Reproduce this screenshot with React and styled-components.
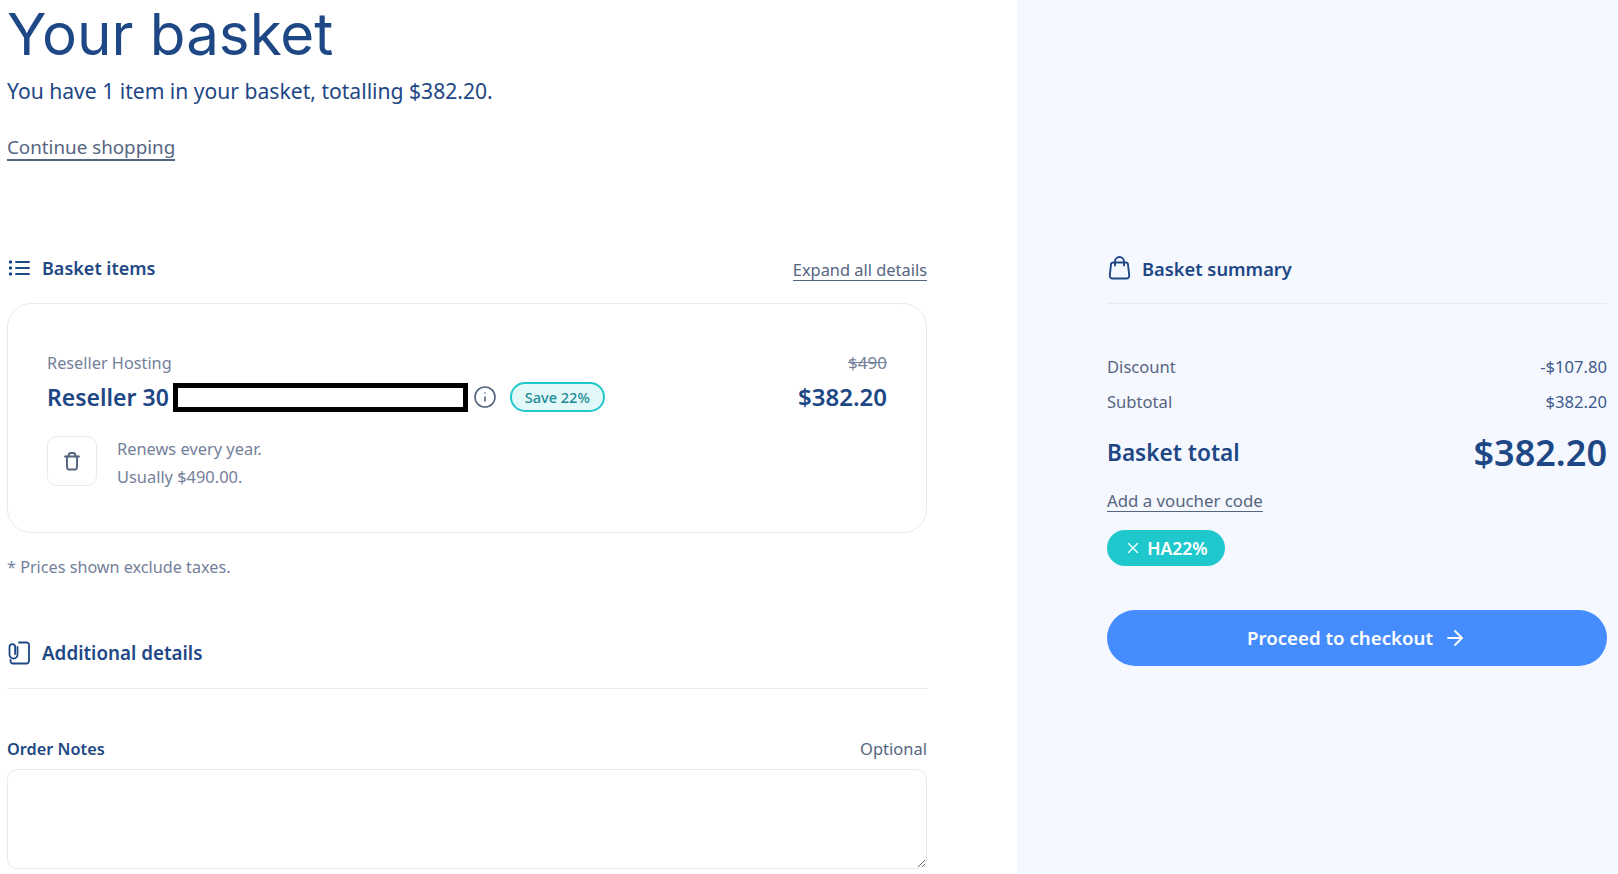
import React from 'react';
import styled, { createGlobalStyle } from 'styled-components';
import { ArrowRight, Info, X } from 'lucide-react';

const NAVY = '#1e4785';
const SLATE = '#56657f';
const GREY = '#74809a';
const LINE = '#e8eaf2';
const TEAL = '#1fc8cc';

const GlobalStyle = createGlobalStyle`
	html, body {
		margin: 0;
		padding: 0;
		background: #fff;
	}
	body {
		font-family: "Noto Sans", "Open Sans", sans-serif;
		color: ${SLATE};
	}
`;

const Page = styled.div`
	width: 100%;
	height: 874px;
	overflow: hidden;
	display: grid;
	grid-template-columns: 1017px 1fr;
`;

const Main = styled.main`
	padding: 0 90px 0 7px;
	display: flex;
	flex-direction: column;
`;

const Sidebar = styled.aside`
	background: #f5f8ff;
	padding: 250px 11px 0 90px;
	display: flex;
	flex-direction: column;
`;

const Title = styled.h1`
	margin: 0;
	font-family: Inter, sans-serif;
	font-size: 58.3px;
	font-weight: 400;
	line-height: 68px;
	color: ${NAVY};
`;

const Lead = styled.p`
	margin: 8px 0 0;
	font-size: 21.1px;
	line-height: 30px;
	color: ${NAVY};
`;

const TextLink = styled.a`
	align-self: ${props => props.$self || 'flex-start'};
	margin-top: ${props => props.$top || 0}px;
	color: ${SLATE};
	font-size: ${props => props.$size || 16.4}px;
	line-height: 1.25;
	border-bottom: ${props => props.$thick ? 2 : 1}px solid ${SLATE};
	cursor: pointer;
`;

const ContinueRow = styled.div`
	margin: 30px 0 89px;
	display: flex;
`;

const SectionHead = styled.div`
	display: flex;
	align-items: center;
	justify-content: space-between;
	height: 36px;
`;

const SectionTitle = styled.h2`
	margin: 0;
	display: flex;
	align-items: center;
	gap: 11px;
	font-size: ${props => props.$size}px;
	font-weight: 600;
	color: ${NAVY};
`;

const IconSlot = styled.span`
	width: 24px;
	height: 24px;
	display: flex;
	align-items: center;
	justify-content: center;
	color: ${NAVY};
`;

const Card = styled.section`
	margin-top: 17px;
	height: 230px;
	box-sizing: border-box;
	border: 1.5px solid ${LINE};
	border-radius: 24px;
	padding: 47px 39px 0;
	display: flex;
	justify-content: space-between;
`;

const ItemInfo = styled.div`
	display: flex;
	flex-direction: column;
`;

const Category = styled.div`
	font-size: 16.3px;
	line-height: 24px;
	color: ${GREY};
`;

const NameRow = styled.div`
	margin-top: 4px;
	height: 36px;
	display: flex;
	align-items: center;
`;

const ItemName = styled.div`
	font-size: 23px;
	font-weight: 600;
	color: ${NAVY};
`;

const Redacted = styled.div`
	margin-left: 4px;
	width: 295px;
	height: 29px;
	box-sizing: border-box;
	border: 5px solid #000;
	background: #fff;
`;

const InfoIcon = styled(Info)`
	margin-left: 5px;
	color: ${SLATE};
`;

const SaveBadge = styled.span`
	margin-left: 13px;
	width: 95px;
	height: 30px;
	box-sizing: border-box;
	display: flex;
	align-items: center;
	justify-content: center;
	border: 2px solid ${TEAL};
	border-radius: 15px;
	background: #e3f8f8;
	color: #1a8a96;
	font-size: 14.5px;
	font-weight: 500;
`;

const RenewRow = styled.div`
	margin-top: 21px;
	display: flex;
	gap: 20px;
`;

const TrashButton = styled.button`
	width: 50px;
	height: 50px;
	padding: 0;
	display: flex;
	align-items: center;
	justify-content: center;
	background: #fff;
	border: 1.5px solid ${LINE};
	border-radius: 10px;
	color: ${SLATE};
`;

const RenewText = styled.div`
	margin-top: -1px;
	font-size: 16.4px;
	line-height: 28px;
	color: ${GREY};
`;

const PriceColumn = styled.div`
	display: flex;
	flex-direction: column;
	align-items: flex-end;
`;

const OldPrice = styled.div`
	font-size: 17px;
	line-height: 24px;
	color: ${GREY};
	text-decoration: line-through;
`;

const Price = styled.div`
	margin-top: 4px;
	font-size: 24px;
	line-height: 36px;
	font-weight: 600;
	color: ${NAVY};
`;

const TaxNote = styled.p`
	margin: 22px 0 56px;
	font-size: 16.2px;
	line-height: 24px;
	color: ${GREY};
`;

const RuledHead = styled(SectionHead)`
	padding-bottom: 17px;
	border-bottom: 1.5px solid ${LINE};
`;

const NotesHead = styled.div`
	margin-top: 46px;
	display: flex;
	justify-content: space-between;
	align-items: center;
	height: 28px;
`;

const NotesLabel = styled.label`
	font-size: 16.3px;
	font-weight: 600;
	color: ${NAVY};
`;

const Optional = styled.span`
	margin-top: -2px;
	font-size: 16.5px;
	color: ${SLATE};
`;

const Notes = styled.textarea`
	margin-top: 6px;
	width: 100%;
	height: 100px;
	box-sizing: border-box;
	display: block;
	border: 1.5px solid ${LINE};
	border-radius: 10px;
	outline: none;
	background: #fff;
`;

const SummaryRows = styled.div`
	margin-top: 45px;
`;

const SummaryRow = styled.div`
	display: flex;
	justify-content: space-between;
	align-items: center;
	height: 35px;
	font-size: 16.6px;
	color: ${SLATE};
`;

const SummaryValue = styled.span`
	color: #40598c;
`;

const TotalRow = styled.div`
	display: flex;
	justify-content: space-between;
	align-items: center;
	height: 67px;
	color: ${NAVY};
	font-weight: 600;
`;

const TotalLabel = styled.span`
	font-size: 22.6px;
`;

const TotalValue = styled.span`
	font-size: 36px;
`;

const VoucherPill = styled.span`
	margin-top: 18px;
	align-self: flex-start;
	width: 118px;
	height: 36px;
	display: flex;
	align-items: center;
	justify-content: center;
	gap: 5px;
	background: ${TEAL};
	border-radius: 18px;
	color: #fff;
	font-size: 17.5px;
	font-weight: 600;
`;

const CheckoutButton = styled.button`
	margin-top: 44px;
	width: 100%;
	height: 56px;
	display: flex;
	align-items: center;
	justify-content: center;
	gap: 10px;
	border: 0;
	border-radius: 28px;
	background: #458cff;
	color: #fff;
	font-family: inherit;
	font-size: 18.7px;
	font-weight: 600;
`;

const ListIcon = () => (
	<svg width="22" height="18" viewBox="0 0 22 18" fill="none" stroke="currentColor" strokeWidth="2" strokeLinecap="round">
		<path d="M8 3h13M8 9h13M8 15h13" />
		<path d="M2.5 3h.01M2.5 9h.01M2.5 15h.01" strokeWidth="3.4" />
	</svg>
);

const ClipIcon = () => (
	<svg width="22" height="24" viewBox="0 0 22 24" fill="none" stroke="currentColor" strokeWidth="1.8" strokeLinecap="round" strokeLinejoin="round">
		<path d="M11 1.5h7.500a2.500 2.500 0 0 1 2.500 2.500v16a2.500 2.500 0 0 1-2.500 2.500H5a2.500 2.500 0 0 1-2.500-2.500V19" />
		<path d="M9.500 6v7.500a4 4 0 0 1-8 0V6a2.800 2.800 0 0 1 5.600 0v7" />
	</svg>
);

const BagIcon = () => (
	<svg width="23" height="24" viewBox="0 0 23 24" fill="none" stroke="currentColor" strokeWidth="1.9" strokeLinecap="round" strokeLinejoin="round">
		<path d="M5 6.500h13c1.200 0 1.800.7 2 2l1.200 10.500c.2 2.200-.9 3.500-3 3.500H4.800c-2.100 0-3.200-1.300-3-3.500L3 8.500c.2-1.300.8-2 2-2z" />
		<path d="M7 9.500V5.500a4.500 4.500 0 0 1 9 0v4" />
	</svg>
);

const TrashIcon = () => (
	<svg width="16" height="19" viewBox="0 0 16 19" fill="none" stroke="currentColor" strokeWidth="2" strokeLinecap="round" strokeLinejoin="round">
		<path d="M1 4.500h14" />
		<path d="M4.800 4.500V3a2 2 0 0 1 2-2h2.400a2 2 0 0 1 2 2v1.500" />
		<path d="M2.800 4.500l.3 11.300a2 2 0 0 0 2 1.700h5.800a2 2 0 0 0 2-1.700l.3-11.300" />
	</svg>
);

export default function App() {
	return (
		<Page>
			<GlobalStyle />
			<Main>
				<Title>Your basket</Title>
				<Lead>You have 1 item in your basket, totalling $382.20.</Lead>
				<ContinueRow>
					<TextLink $size={18.8} $thick>Continue shopping</TextLink>
				</ContinueRow>

				<SectionHead>
					<SectionTitle $size={18}><IconSlot><ListIcon /></IconSlot>Basket items</SectionTitle>
					<TextLink $self="center" $top={4}>Expand all details</TextLink>
				</SectionHead>

				<Card>
					<ItemInfo>
						<Category>Reseller Hosting</Category>
						<NameRow>
							<ItemName>Reseller 30</ItemName>
							<Redacted />
							<InfoIcon size={24} strokeWidth={1.6} />
							<SaveBadge>Save 22%</SaveBadge>
						</NameRow>
						<RenewRow>
							<TrashButton aria-label="Remove"><TrashIcon /></TrashButton>
							<RenewText>Renews every year.<br />Usually $490.00.</RenewText>
						</RenewRow>
					</ItemInfo>
					<PriceColumn>
						<OldPrice>$490</OldPrice>
						<Price>$382.20</Price>
					</PriceColumn>
				</Card>

				<TaxNote>* Prices shown exclude taxes.</TaxNote>

				<RuledHead>
					<SectionTitle $size={18.8}><IconSlot><ClipIcon /></IconSlot>Additional details</SectionTitle>
				</RuledHead>

				<NotesHead>
					<NotesLabel>Order Notes</NotesLabel>
					<Optional>Optional</Optional>
				</NotesHead>
				<Notes />
			</Main>

			<Sidebar>
				<RuledHead>
					<SectionTitle $size={18.3}><IconSlot><BagIcon /></IconSlot>Basket summary</SectionTitle>
				</RuledHead>
				<SummaryRows>
					<SummaryRow>
						<span>Discount</span><SummaryValue>-$107.80</SummaryValue>
					</SummaryRow>
					<SummaryRow>
						<span>Subtotal</span><SummaryValue>$382.20</SummaryValue>
					</SummaryRow>
				</SummaryRows>
				<TotalRow>
					<TotalLabel>Basket total</TotalLabel>
					<TotalValue>$382.20</TotalValue>
				</TotalRow>
				<TextLink $top={4} $size={16.8}>Add a voucher code</TextLink>
				<VoucherPill><X size={18} strokeWidth={1.8} />HA22%</VoucherPill>
				<CheckoutButton>Proceed to checkout<ArrowRight size={24} strokeWidth={1.8} /></CheckoutButton>
			</Sidebar>
		</Page>
	);
}
